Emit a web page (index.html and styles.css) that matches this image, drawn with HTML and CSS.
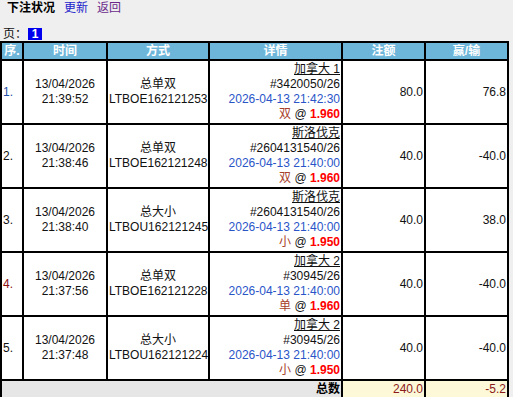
FILE: index.html
```html
<!DOCTYPE html>
<html>
<head>
<meta charset="utf-8">
<link rel="stylesheet" href="styles.css">
</head>
<body>
<div class="top"><b class="title">下注状况</b><a class="link">更新</a><a class="link visited">返回</a></div>
<div class="pager">页：<span class="pg">1</span></div>
<table class="bets">
<colgroup><col class="c1"><col class="c2"><col class="c3"><col class="c4"><col class="c5"><col class="c6"></colgroup>
<thead>
<tr><th>序.</th><th>时间</th><th>方式</th><th>详情</th><th>注额</th><th>赢/输</th></tr>
</thead>
<tbody>
<tr>
<td class="no blue">1.</td>
<td class="ctr">13/04/2026<br>21:39:52</td>
<td class="ctr">总单双<br>LTBOE162121253</td>
<td class="det"><u>加拿大 1</u><br>#3420050/26<br><span class="dt">2026-04-13 21:42:30</span><br><span class="pick">双</span> @ <b class="odds">1.960</b></td>
<td class="num">80.0</td>
<td class="num">76.8</td>
</tr>
<tr>
<td class="no">2.</td>
<td class="ctr">13/04/2026<br>21:38:46</td>
<td class="ctr">总单双<br>LTBOE162121248</td>
<td class="det"><u>斯洛伐克</u><br>#2604131540/26<br><span class="dt">2026-04-13 21:40:00</span><br><span class="pick">双</span> @ <b class="odds">1.960</b></td>
<td class="num">40.0</td>
<td class="num">-40.0</td>
</tr>
<tr>
<td class="no">3.</td>
<td class="ctr">13/04/2026<br>21:38:40</td>
<td class="ctr">总大小<br>LTBOU162121245</td>
<td class="det"><u>斯洛伐克</u><br>#2604131540/26<br><span class="dt">2026-04-13 21:40:00</span><br><span class="pick">小</span> @ <b class="odds">1.950</b></td>
<td class="num">40.0</td>
<td class="num">38.0</td>
</tr>
<tr>
<td class="no red">4.</td>
<td class="ctr">13/04/2026<br>21:37:56</td>
<td class="ctr">总单双<br>LTBOE162121228</td>
<td class="det"><u>加拿大 2</u><br>#30945/26<br><span class="dt">2026-04-13 21:40:00</span><br><span class="pick">单</span> @ <b class="odds">1.960</b></td>
<td class="num">40.0</td>
<td class="num">-40.0</td>
</tr>
<tr>
<td class="no">5.</td>
<td class="ctr">13/04/2026<br>21:37:48</td>
<td class="ctr">总大小<br>LTBOU162121224</td>
<td class="det"><u>加拿大 2</u><br>#30945/26<br><span class="dt">2026-04-13 21:40:00</span><br><span class="pick">小</span> @ <b class="odds">1.950</b></td>
<td class="num">40.0</td>
<td class="num">-40.0</td>
</tr>
</tbody>
<tfoot>
<tr>
<td class="sumlabel" colspan="4">总数</td>
<td class="sum">240.0</td>
<td class="sum">-5.2</td>
</tr>
</tfoot>
</table>
</body>
</html>
```
FILE: styles.css
```css
html, body {
  margin: 0;
  padding: 0;
  background: #efefef;
  font-family: "Liberation Sans", Arial, "Noto Sans CJK SC", sans-serif;
  font-size: 12px;
  color: #111;
}
.top {
  height: 18px;
  line-height: 17px;
  padding-left: 7px;
  display: flex;
  gap: 9px;
}
.title { font-weight: bold; color: #000; }
.link { color: #2222cc; }
.visited { color: #6b2a8a; }
.pager {
  margin-top: 9px;
  height: 14px;
  line-height: 14px;
  padding-left: 3px;
  display: flex;
  align-items: center;
}
.pg {
  display: inline-block;
  width: 14px;
  height: 12px;
  line-height: 12px;
  background: #0000ee;
  color: #fff;
  font-weight: bold;
  text-align: center;
  margin-left: 1px;
}
.bets {
  width: 509px;
  table-layout: fixed;
  border-collapse: separate;
  border-spacing: 0;
  border: 1px solid #000;
  background: #fff;
}
.c1 { width: 22px; }
.c2 { width: 84px; }
.c3 { width: 102px; }
.c4 { width: 133px; }
.c5 { width: 83px; }
.c6 { width: 83px; }
.bets th, .bets td {
  border: 1px solid #000;
  padding: 0 1px;
  line-height: 15px;
  vertical-align: middle;
  overflow: hidden;
  white-space: nowrap;
}
.bets th {
  background: #6db6da;
  color: #fff;
  font-weight: bold;
  height: 16px;
  line-height: 16px;
  text-align: center;
}
.bets tbody td { height: 59px; padding-top: 1px; padding-bottom: 1px; }
.no { text-align: left; }
.blue { color: #1f4fa8; }
.red { color: #8b1010; }
.ctr { text-align: center; }
.det { text-align: right; }
.dt { color: #2a55c8; }
.pick { color: #a8402a; }
.odds { color: #ff0000; }
.num { text-align: right; }
.bets tfoot td { height: 17px; line-height: 17px; }
.sumlabel {
  background: #e6e6e6;
  text-align: right;
  font-weight: bold;
  color: #000;
}
.sum {
  background: #fdf8d8;
  color: #8b1a1a;
  text-align: right;
}
```
